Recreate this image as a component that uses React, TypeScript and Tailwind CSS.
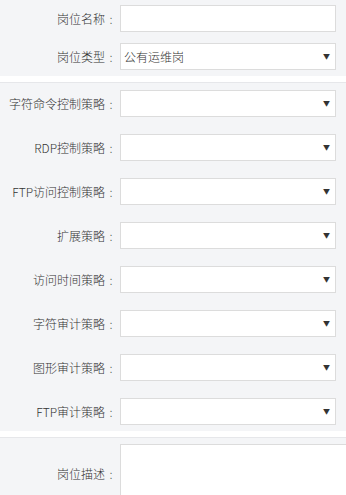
const FONT = { fontFamily: '"Microsoft YaHei", "Noto Sans CJK SC", "Liberation Sans", sans-serif' }

const STRATEGIES = [
  '字符命令控制策略',
  'RDP控制策略',
  'FTP访问控制策略',
  '扩展策略',
  '访问时间策略',
  '字符审计策略',
  '图形审计策略',
  'FTP审计策略',
]

function Label({ text }: { text: string }) {
  return (
    <div className="w-[120px] shrink-0 pr-[3px] text-right text-[12px] font-light text-[#333]">
      {text}
      <span className="inline-block w-[12px] text-center">:</span>
    </div>
  )
}

function Select({ value }: { value?: string }) {
  return (
    <div className="flex h-[27px] w-[216px] items-center justify-between border border-[#dcdcdc] bg-white pl-[3px] pr-[5px] text-[12px] font-light text-[#333]">
      <span>{value}</span>
      <span className="text-[7px] leading-none text-[#333]">▼</span>
    </div>
  )
}

export default function App() {
  return (
    <div className="h-[495px] w-[346px] overflow-hidden bg-white" style={FONT}>
      {/* basic */}
      <div className="flex flex-col gap-[11px] bg-[#f4f5f7] pb-[6px] pt-[5px]">
        <div className="flex items-center">
          <Label text="岗位名称" />
          <div className="h-[27px] w-[216px] border border-[#dcdcdc] bg-white" />
        </div>
        <div className="flex items-center">
          <Label text="岗位类型" />
          <Select value="公有运维岗" />
        </div>
      </div>

      {/* strategies */}
      <div className="mt-[6px] flex flex-col gap-[17px] border-t border-[#e6e7ea] bg-[#f4f5f7] pb-[6px] pt-[7px]">
        {STRATEGIES.map(s => (
          <div key={s} className="flex items-center">
            <Label text={s} />
            <Select />
          </div>
        ))}
      </div>

      {/* description */}
      <div className="mt-[6px] h-[60px] border-t border-[#e6e7ea] bg-[#f4f5f7] pt-[6px]">
        <div className="flex items-center">
          <Label text="岗位描述" />
          <div className="h-[60px] w-[240px] shrink-0 border border-[#dcdcdc] bg-white" />
        </div>
      </div>
    </div>
  )
}
